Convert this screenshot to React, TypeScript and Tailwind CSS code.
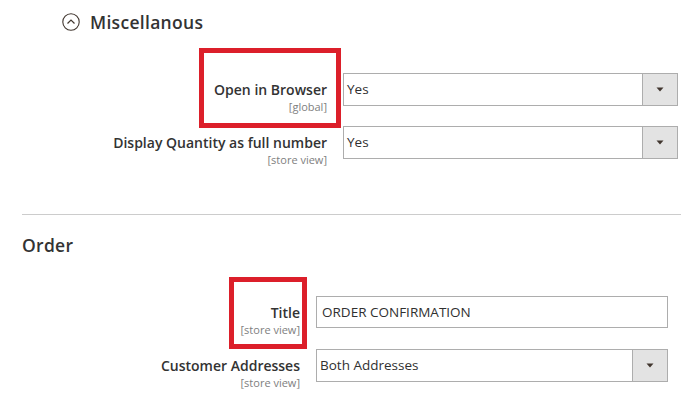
import React from "react";

const font = { fontFamily: '"Open Sans", "Liberation Sans", sans-serif' };

function Arrow() {
  return (
    <svg width="8" height="5" viewBox="0 0 8 5" className="block">
      <path d="M0.5 0.5 L7.5 0.5 L4 4.5 Z" fill="#41362f" />
    </svg>
  );
}

function Select({ value, width }: { value: string; width: string }) {
  return (
    <div className={`flex h-[33px] ${width} border border-[#adadad] bg-white`}>
      <div className="flex flex-1 items-center pl-[3px] text-[13.5px] text-[#303030]">{value}</div>
      <div className="flex w-[35px] items-center justify-center border-l border-[#adadad] bg-[#e3e3e3]">
        <Arrow />
      </div>
    </div>
  );
}

function Input({ value, width }: { value: string; width: string }) {
  return (
    <div className={`flex h-[32px] ${width} items-center border border-[#adadad] bg-white pl-[5px] text-[13.5px] text-[#303030]`}>
      {value}
    </div>
  );
}

function Label({
  title,
  scope,
  width,
  boxed,
  box,
}: {
  title: string;
  scope: string;
  width: string;
  boxed?: boolean;
  box?: string;
}) {
  return (
    <div className={`relative ${width} pt-[7px] text-right`}>
      <div className="text-[14px] font-semibold leading-[19px] text-[#333333]">{title}</div>
      <div className="text-[11px] leading-[15px] text-[#808080]">{scope}</div>
      {boxed && <div className={`pointer-events-none absolute border-[5px] border-[#dc1f2a] ${box}`} />}
    </div>
  );
}

export default function App() {
  return (
    <div className="h-[401px] w-[681px] overflow-hidden bg-white" style={font}>
      <div className="flex h-[24px] items-center gap-[10px] pl-[62px] pt-[10px] box-content">
        <svg width="18" height="18" viewBox="0 0 18 18" className="block">
          <circle cx="9" cy="9" r="8.2" fill="none" stroke="#41362f" strokeWidth="1.1" />
          <path d="M5.5 10.5 L9 7 L12.5 10.5" fill="none" stroke="#41362f" strokeWidth="1.2" />
        </svg>
        <span className="text-[17.5px] font-semibold leading-[23px] tracking-[0.3px] text-[#333333]">Miscellanous</span>
      </div>

      <div className="mt-[39px] flex h-[53px] items-start">
        <Label
          title="Open in Browser"
          scope="[global]"
          width="w-[327px]"
          boxed
          box="left-[199px] top-[-25px] h-[80px] w-[142px]"
        />
        <div className="ml-[16px]">
          <Select value="Yes" width="w-[335px]" />
        </div>
      </div>

      <div className="flex h-[88px] items-start">
        <Label title="Display Quantity as full number" scope="[store view]" width="w-[327px]" />
        <div className="ml-[16px]">
          <Select value="Yes" width="w-[335px]" />
        </div>
      </div>

      <div className="ml-[22px] h-[1px] bg-[#cccccc]" />

      <div className="mt-[19px] pl-[22px] text-[17.5px] font-semibold leading-[23px] tracking-[0.3px] text-[#333333]">Order</div>

      <div className="mt-[39px] flex h-[53px] items-start">
        <Label
          title="Title"
          scope="[store view]"
          width="w-[300px]"
          boxed
          box="left-[229px] top-[-19px] h-[72px] w-[78px]"
        />
        <div className="ml-[16px]">
          <Input value="ORDER CONFIRMATION" width="w-[352px]" />
        </div>
      </div>

      <div className="flex items-start">
        <Label title="Customer Addresses" scope="[store view]" width="w-[300px]" />
        <div className="ml-[16px]">
          <Select value="Both Addresses" width="w-[352px]" />
        </div>
      </div>
    </div>
  );
}
